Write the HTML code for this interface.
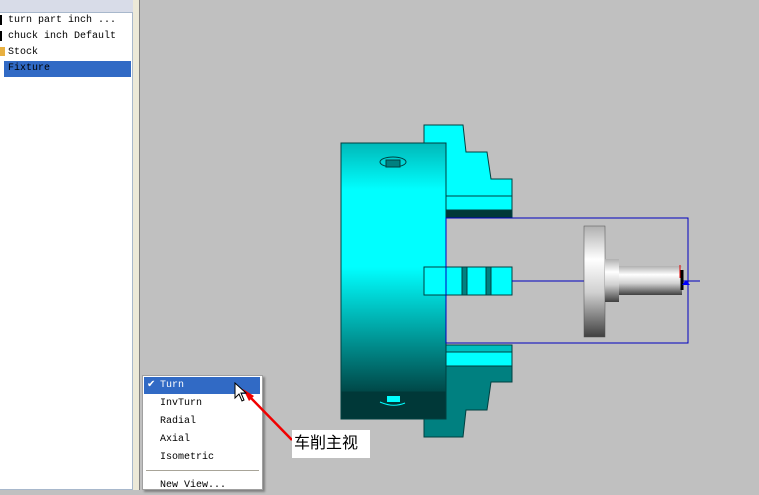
<!DOCTYPE html><html><head><style>
body{margin:0;width:759px;height:490px;background:#c0c0c0;position:relative;overflow:hidden;font-family:"Liberation Mono",monospace;font-size:10px}
div{position:absolute;box-sizing:border-box}
.it{left:8px;height:16px;line-height:16px;color:#000;font-size:10px}
.mi{left:160px;height:18px;line-height:18px;color:#000;font-size:10px}
</style></head><body>
<div style="left:0;top:0;width:140px;height:490px;background:#ece9d8"></div>
<div style="left:0;top:0;width:133px;height:12px;background:#d8dce8"></div>
<div style="left:0;top:12px;width:133px;height:478px;background:#fff;border:1px solid #a8b8cc;border-left:none"></div>
<div style="left:139px;top:0;width:1px;height:490px;background:#808080"></div>
<div style="left:0;top:15px;width:2px;height:10px;background:#000"></div>
<div style="left:0;top:31px;width:2px;height:10px;background:#000"></div>
<div style="left:0;top:47px;width:5px;height:9px;background:#e8b040"></div>
<div class="it" style="top:13px">turn part inch ...</div>
<div class="it" style="top:29px">chuck inch Default</div>
<div class="it" style="top:45px">Stock</div>
<div style="left:4px;top:61px;width:127px;height:16px;background:#316ac5"></div>
<div class="it" style="top:61px">Fixture</div>
<svg style="position:absolute;left:0;top:0" width="759" height="490">
<defs><linearGradient id="g" x1="0" y1="0" x2="0" y2="1">
<stop offset="0" stop-color="#00b8b8"/><stop offset=".17" stop-color="#00ffff"/><stop offset=".45" stop-color="#00ffff"/><stop offset=".9" stop-color="#004848"/><stop offset=".9" stop-color="#003838"/><stop offset="1" stop-color="#003838"/></linearGradient>
<linearGradient id="m" x1="0" y1="0" x2="0" y2="1"><stop offset="0" stop-color="#b0b0b0"/><stop offset=".3" stop-color="#fff"/><stop offset=".6" stop-color="#d0d0d0"/><stop offset="1" stop-color="#404040"/></linearGradient></defs>
<g stroke="#004040" stroke-width="1">
<polygon points="424,125 463,125 466,152 487,152 491,179 512,179 512,218 446,218 446,143 424,143" fill="#00ffff"/>
<rect x="446" y="210" width="66" height="8" fill="#003838"/>
<line x1="446" y1="196" x2="512" y2="196"/>
<polygon points="446,345 512,345 512,366 446,366" fill="#00ffff"/>
<rect x="446" y="345" width="66" height="7" fill="#00c0c0"/>
<polygon points="446,366 512,366 512,382 491,382 487,410 466,410 463,437 424,437 424,419 446,419" fill="#008080"/>
<rect x="341" y="143" width="105" height="276" fill="url(#g)"/>
<rect x="424" y="267" width="88" height="28" fill="#00ffff"/>
<rect x="462" y="267" width="5" height="28" fill="#008080"/>
<rect x="486" y="267" width="5" height="28" fill="#008080"/>
</g>
<ellipse cx="393" cy="162" rx="13" ry="5" fill="none" stroke="#004040"/><rect x="386" y="160" width="14" height="7" fill="#008080" stroke="#004040"/>
<rect x="387" y="396" width="13" height="6" fill="#00ffff"/><path d="M380 402 Q393 408 405 403" stroke="#00ffff" fill="none"/>
<rect x="446" y="218" width="242" height="125" fill="none" stroke="#0000c0"/>
<line x1="512" y1="281" x2="700" y2="281" stroke="#0000c0"/>
<rect x="584" y="226" width="21" height="111" fill="url(#m)" stroke="#505050" stroke-width=".5"/>
<rect x="605" y="259" width="14" height="43" fill="url(#m)"/>
<rect x="619" y="266" width="63" height="29" fill="url(#m)"/>
<path d="M682 270 L682 290" stroke="#000" stroke-width="3"/>
<path d="M680 265 L680 278" stroke="#e00000"/>
<path d="M682 285 L690 285 L686 280Z" fill="#0000ff"/>
</svg>
<div style="left:142px;top:375px;width:121px;height:115px;background:#fff;border:1px solid #a0a0a0;box-shadow:2px 2px 2px #808080"></div>
<div style="left:144px;top:377px;width:116px;height:17px;background:#316ac5"></div>
<div style="left:147px;top:377px;height:17px;line-height:17px;color:#fff;font-size:10px">✔</div>
<div class="mi" style="top:377px;color:#fff;line-height:17px">Turn</div>
<div class="mi" style="top:395px">InvTurn</div>
<div class="mi" style="top:413px">Radial</div>
<div class="mi" style="top:431px">Axial</div>
<div class="mi" style="top:449px">Isometric</div>
<div style="left:146px;top:470px;width:113px;height:1px;background:#a8a498"></div>
<div class="mi" style="top:477px">New View...</div>
<svg style="position:absolute;left:0;top:0" width="759" height="490">
<path d="M249 396 L292 440" stroke="#f00000" stroke-width="2.5"/>
<path d="M243 389 L254 396 L249 401Z" fill="#f00000"/>
</svg>
<svg style="position:absolute;left:234px;top:382px" width="14" height="22"><path d="M1 1 L1 16 L5 12 L8 19 L10 18 L7 11 L12 11Z" fill="#fff" stroke="#000"/></svg>
<div style="left:292px;top:430px;width:78px;height:28px;background:#fff;font-family:'Liberation Sans','Noto Sans CJK SC',sans-serif;font-size:16px;line-height:28px;padding-left:2px">车削主视</div>
</body></html>
